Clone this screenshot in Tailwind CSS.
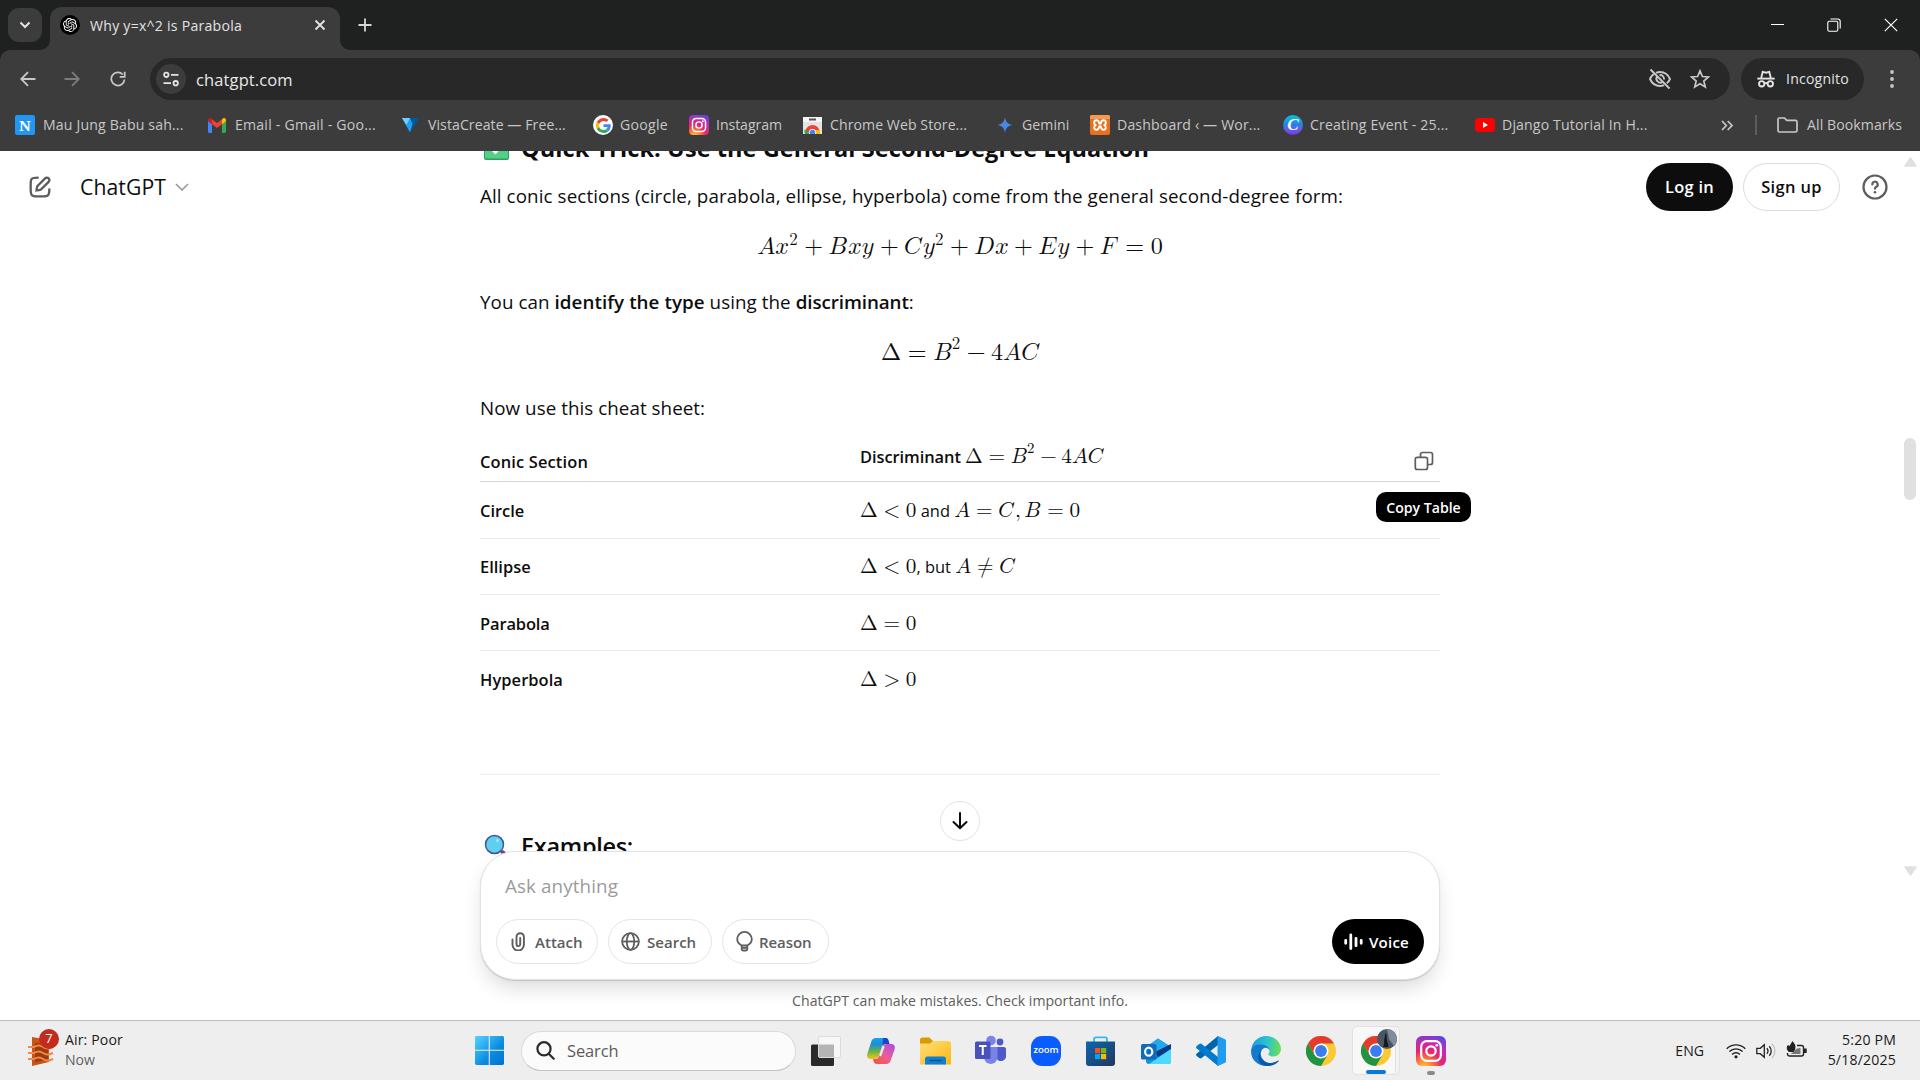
<!DOCTYPE html>
<html lang="en">
<head>
<meta charset="utf-8">
<title>Why y=x^2 is Parabola</title>
<script src="https://cdn.jsdelivr.net/npm/@tailwindcss/browser@4"></script>
</head>
<body class="flex h-[1080px] w-[1920px] flex-col overflow-hidden bg-white font-['Open_Sans',sans-serif] text-[14.1px] text-[#0d0d0d]">

<!-- Title bar -->
<header class="flex h-[50px] shrink-0 items-end bg-[#1f2121]">
  <div class="mb-2 ml-2 flex h-[34px] w-[34px] items-center justify-center rounded-[11px] bg-[#3c3c3c]">
    <svg class="size-[14px]" viewBox="0 0 14 14" fill="none" stroke="#e3e3e3" stroke-width="2"><path d="M2.5 4.5 7 9l4.5-4.5"/></svg>
  </div>
  <svg class="ml-[-2px] h-[10px] w-[10px]" viewBox="0 0 10 10"><path d="M10 0v10H0A10 10 0 0 0 10 0z" fill="#3c3c3c"/></svg>
  <div class="flex h-[43px] w-[290px] items-center rounded-t-[12px] bg-[#3c3c3c] pb-[7px] pl-[10px] pr-[14px]">
    <div class="flex size-5 items-center justify-center rounded-full bg-black">
      <svg class="size-[14px]" viewBox="0 0 24 24" fill="#fff"><path d="M22.2819 9.8211a5.9847 5.9847 0 0 0-.5157-4.9108 6.0462 6.0462 0 0 0-6.5098-2.9A6.0651 6.0651 0 0 0 4.9807 4.1818a5.9847 5.9847 0 0 0-3.9977 2.9 6.0462 6.0462 0 0 0 .7427 7.0966 5.98 5.98 0 0 0 .511 4.9107 6.051 6.051 0 0 0 6.5146 2.9001A5.9847 5.9847 0 0 0 13.2599 24a6.0557 6.0557 0 0 0 5.7718-4.2058 5.9894 5.9894 0 0 0 3.9977-2.9001 6.0557 6.0557 0 0 0-.7475-7.0729zm-9.022 12.6081a4.4755 4.4755 0 0 1-2.8764-1.0408l.1419-.0804 4.7783-2.7582a.7948.7948 0 0 0 .3927-.6813v-6.7369l2.02 1.1686a.071.071 0 0 1 .038.052v5.5826a4.504 4.504 0 0 1-4.4945 4.4944zm-9.6607-4.1254a4.4708 4.4708 0 0 1-.5346-3.0137l.142.0852 4.783 2.7582a.7712.7712 0 0 0 .7806 0l5.8428-3.3685v2.3324a.0804.0804 0 0 1-.0332.0615L9.74 19.9502a4.4992 4.4992 0 0 1-6.1408-1.6464zM2.3408 7.8956a4.485 4.485 0 0 1 2.3655-1.9728V11.6a.7664.7664 0 0 0 .3879.6765l5.8144 3.3543-2.0201 1.1685a.0757.0757 0 0 1-.071 0l-4.8303-2.7865A4.504 4.504 0 0 1 2.3408 7.872zm16.5963 3.8558L13.1038 8.364 15.1192 7.2a.0757.0757 0 0 1 .071 0l4.8303 2.7913a4.4944 4.4944 0 0 1-.6765 8.1042v-5.6772a.79.79 0 0 0-.407-.667zm2.0107-3.0231l-.142-.0852-4.7735-2.7818a.7759.7759 0 0 0-.7854 0L9.409 9.2297V6.8974a.0662.0662 0 0 1 .0284-.0615l4.8303-2.7866a4.4992 4.4992 0 0 1 6.6802 4.66zM8.3065 12.863l-2.02-1.1638a.0804.0804 0 0 1-.038-.0567V6.0742a4.4992 4.4992 0 0 1 7.3757-3.4537l-.142.0805L8.704 5.459a.7948.7948 0 0 0-.3927.6813zm1.0976-2.3654l2.602-1.4998 2.6069 1.4998v2.9994l-2.5974 1.4997-2.6067-1.4997Z"/></svg>
    </div>
    <span class="ml-[10px] mt-[2px] flex-1 whitespace-nowrap tracking-[0.24px] text-[#e3e3e3]">Why y=x^2 is Parabola</span>
    <svg class="size-3" viewBox="0 0 12 12" stroke="#e3e3e3" stroke-width="1.8"><path d="M1.5 1.5l9 9M10.5 1.5l-9 9"/></svg>
  </div>
  <svg class="h-[10px] w-[10px]" viewBox="0 0 10 10"><path d="M0 0v10h10A10 10 0 0 1 0 0z" fill="#3c3c3c"/></svg>
  <svg class="mb-[18px] ml-[8px] size-[14px]" viewBox="0 0 14 14" stroke="#d6d6d6" stroke-width="1.8"><path d="M7 .5v13M.5 7h13"/></svg>
  <div class="ml-auto mb-[18px] mr-[22px] flex items-center gap-[43px]">
    <svg class="size-[13px]" viewBox="0 0 13 13" stroke="#fff" stroke-width="1"><path d="M0 5.500h13"/></svg>
    <svg class="size-[14px]" viewBox="0 0 14 14" fill="none" stroke="#fff" stroke-width="1.1"><rect x=".8" y="3.2" width="10" height="10" rx="1.5"/><path d="M3.5 1h7.2c1.500 0 2.500 1 2.500 2.500v7"/></svg>
    <svg class="size-[14px]" viewBox="0 0 14 14" stroke="#fff" stroke-width="1.2"><path d="M.8.8l12.400 12.400M13.200.8.8 13.200"/></svg>
  </div>
</header>

<!-- Address bar -->
<div class="shrink-0 bg-[#1f2121]">
<nav class="flex h-[58px] items-center rounded-t-[10px] bg-[#3c3c3c] pl-[20px]">
  <svg class="size-4" viewBox="0 0 16 16" fill="none" stroke="#c7c7c7" stroke-width="1.8"><path d="M15.500 8H1.500M8 1.200 1.200 8 8 14.800"/></svg>
  <svg class="ml-[28px] size-4" viewBox="0 0 16 16" fill="none" stroke="#7c7c7c" stroke-width="1.8"><path d="M.5 8h14M8 1.200 14.800 8 8 14.800"/></svg>
  <svg class="ml-[30px] size-4" viewBox="0 0 16 16" fill="none" stroke="#c7c7c7" stroke-width="1.800"><path d="M14.500 8.500a6.600 6.600 0 1 1-1.700-5"/><path d="M14.700.8v5h-5"/></svg>
  <div class="ml-[24px] flex h-[42px] w-[1580px] items-center rounded-full bg-[#282828] pl-[6px] pr-[20px]">
    <div class="flex size-[30px] items-center justify-center rounded-full bg-[#3c3c3c]">
      <svg class="size-[16px]" viewBox="0 0 16 16" fill="none" stroke="#e3e3e3" stroke-width="1.800"><circle cx="3.300" cy="3.800" r="2.200"/><path d="M8 3.800h7.500M.5 12.200H8"/><circle cx="12.700" cy="12.200" r="2.200"/></svg>
    </div>
    <span class="ml-[10px] mt-[2px] flex-1 text-[16.5px] tracking-[0.12px] text-[#e8e8e8]">chatgpt.com</span>
    <svg class="size-6" viewBox="0 0 24 24" fill="none" stroke="#c7c7c7" stroke-width="1.900"><path d="M8 5.800C9.200 5.300 10.500 5 12 5c4.500 0 8 2.500 10 7-.8 1.800-1.900 3.200-3.200 4.300M16 18.200c-1.200.5-2.600.8-4 .8-4.500 0-8-2.500-10-7 .9-2 2.200-3.700 3.800-4.900"/><path d="M11.500 8a4 4 0 0 1 4.500 4.500M9 9.500a4 4 0 0 0 5.500 5.500M2.500 2.500l19 19"/></svg>
    <svg class="ml-[18px] size-[20px]" viewBox="0 0 20 20" fill="none" stroke="#c7c7c7" stroke-width="1.700"><path d="M10 1.800l2.400 5.700 6.100.5-4.700 4 1.500 6-5.300-3.200L4.700 18l1.500-6-4.700-4 6.100-.5z"/></svg>
  </div>
  <div class="ml-[11px] flex h-[42px] w-[123px] items-center rounded-full bg-[#282828] pl-4">
    <svg class="mt-[-1px] size-[18px]" viewBox="0 0 18 18" fill="none" stroke="#e3e3e3" stroke-width="1.900"><path d="M.3 8.600h17.400"/><path d="M4.200 8 5.700 1.800 9 2.700l3.300-.9L13.800 8"/><circle cx="4.700" cy="13.800" r="2.700"/><circle cx="13.300" cy="13.800" r="2.700"/><path d="M7.300 13.400q1.700-.9 3.400 0"/></svg>
    <span class="ml-[11px] tracking-[0.2px] text-[#e3e3e3]">Incognito</span>
  </div>
  <svg class="ml-[26px] h-[18px] w-1" viewBox="0 0 4 18" fill="#c7c7c7"><circle cx="2" cy="2" r="1.900"/><circle cx="2" cy="9" r="1.900"/><circle cx="2" cy="16" r="1.900"/></svg>
</nav>
</div>

<!-- Bookmarks bar -->
<nav class="flex h-[43px] shrink-0 items-start bg-[#3c3c3c] pl-[15px] text-[#c7c7c7]">
  <div class="mt-[7px] flex h-[20px] w-full items-center whitespace-nowrap">
    <div class="flex w-[193px] shrink-0 items-center">
      <span class="flex size-[20px] items-center justify-center rounded-[2px] bg-[#2196f3] font-['Noto_Serif',serif] text-[15px] font-bold text-white">N</span>
      <span class="ml-[8px] tracking-[0.16px]">Mau Jung Babu sah...</span>
    </div>
    <div class="flex w-[194px] shrink-0 items-center">
      <svg class="h-[15px] w-[18px]" viewBox="0 0 18 15"><path d="M0 2v11.800c0 .7.500 1.200 1.200 1.200H4V6z" fill="#4285f4"/><path d="M18 2v11.800c0 .7-.5 1.200-1.200 1.200H14V6z" fill="#34a853"/><path d="M4 6.200 9 10l5-3.800V1.200L9 5 4 1.200z" fill="#ea4335"/><path d="M14 1.200v5l4-3V2c0-1.900-2-2.500-3.200-1.500z" fill="#fbbc04"/><path d="M4 1.200v5l-4-3V2C0 .1 2-.5 3.200.5z" fill="#c5221f"/></svg>
      <span class="ml-[9px] tracking-[0.22px]">Email - Gmail - Goo...</span>
    </div>
    <div class="flex w-[191px] shrink-0 items-center">
      <svg class="h-[15px] w-[17px]" viewBox="0 0 17 15"><path d="M0 0h8l3 5-3 9.500z" fill="#1da1f2"/><path d="M0 0h8L4.500 7z" fill="#6dd0ff"/><path d="M8 0h9L8 15l3-8z" fill="#00589c"/></svg>
      <span class="ml-[9px] tracking-[0.07px]">VistaCreate — Free...</span>
    </div>
    <div class="flex w-[96px] shrink-0 items-center">
      <span class="flex size-[20px] items-center justify-center rounded-full bg-white"><svg class="size-[15px]" viewBox="0 0 48 48"><path fill="#EA4335" d="M24 9.500c3.540 0 6.710 1.220 9.210 3.600l6.850-6.850C35.900 2.380 30.470 0 24 0 14.620 0 6.510 5.380 2.560 13.220l7.980 6.190C12.430 13.720 17.740 9.500 24 9.500z"/><path fill="#4285F4" d="M46.980 24.550c0-1.570-.15-3.090-.38-4.550H24v9.020h12.940c-.58 2.960-2.260 5.480-4.780 7.180l7.730 6c4.510-4.180 7.090-10.360 7.090-17.650z"/><path fill="#FBBC05" d="M10.530 28.590c-.48-1.450-.76-2.990-.76-4.590s.27-3.140.76-4.590l-7.980-6.190C.92 16.460 0 20.120 0 24c0 3.880.92 7.540 2.560 10.780l7.970-6.190z"/><path fill="#34A853" d="M24 48c6.480 0 11.930-2.130 15.890-5.810l-7.730-6c-2.150 1.450-4.920 2.300-8.160 2.300-6.260 0-11.570-4.220-13.470-9.910l-7.980 6.190C6.510 42.620 14.620 48 24 48z"/></svg></span>
      <span class="ml-[7px] tracking-[0.28px]">Google</span>
    </div>
    <div class="flex w-[114px] shrink-0 items-center">
      <svg class="size-[20px]" viewBox="0 0 30 30"><use href="#insta"/></svg>
      <span class="ml-[7px] tracking-[-0.05px]">Instagram</span>
    </div>
    <div class="flex w-[194px] shrink-0 items-center">
      <svg class="h-[17px] w-[19px]" viewBox="0 0 19 17"><path d="M0 0h19v17H0z" fill="#e3e3e3"/><path d="M0 0h19v5H0z" fill="#f5f5f5"/><path d="M6 1.500h7v2H6z" fill="#555"/><path d="M2 17a7.500 8.500 0 0 1 14.500-3.500H9z" fill="#ea4335"/><path d="M1.500 12.500A8 8 0 0 0 2 17h6z" fill="#34a853"/><path d="M16.700 13H11v4h6.200z" fill="#fbbc04"/><circle cx="9.500" cy="15.500" r="3.600" fill="#fff"/><circle cx="9.500" cy="15.500" r="2.800" fill="#4285f4"/></svg>
      <span class="ml-2 tracking-[0.07px]">Chrome Web Store...</span>
    </div>
    <div class="flex w-[93px] shrink-0 items-center">
      <svg class="size-4" viewBox="0 0 16 16"><path d="M8 0c.6 5 3 7.400 8 8-5 .6-7.400 3-8 8-.6-5-3-7.400-8-8 5-.6 7.400-3 8-8z" fill="url(#gem)"/></svg>
      <span class="ml-[9px] tracking-[0.06px]">Gemini</span>
    </div>
    <div class="flex w-[193px] shrink-0 items-center">
      <svg class="size-[20px]" viewBox="0 0 20 20"><rect width="20" height="20" rx="2" fill="#e8701c"/><path d="M0 2a2 2 0 0 1 2-2h16a2 2 0 0 1 2 2v2H0z" fill="#f29b52"/><path d="M7.500 5.500C4 4.500 3 8 5.500 10 3 12 4 15.500 7.500 14.500 10 13.500 8 11.300 10 11.300s0 2.200 2.500 3.200C16 15.500 17 12 14.500 10 17 8 16 4.500 12.500 5.500 10 6.500 12 8.700 10 8.700s0-2.200-2.500-3.200z" fill="none" stroke="#fff" stroke-width="2"/></svg>
      <span class="ml-[7px] tracking-[0.15px]">Dashboard ‹ — Wor...</span>
    </div>
    <div class="flex w-[192px] shrink-0 items-center">
      <span class="flex size-[20px] items-center justify-center rounded-full bg-linear-to-b from-[#00c4cc] via-[#2b7be8] to-[#7d2ae8] font-['Liberation_Serif',serif] text-[17px] font-bold italic text-white">C</span>
      <span class="ml-[7px] tracking-[0.18px]">Creating Event - 25...</span>
    </div>
    <div class="flex w-[246px] shrink-0 items-center">
      <svg class="h-[14px] w-5" viewBox="0 0 20 14"><rect width="20" height="14" rx="3.500" fill="#f00"/><path d="M8 4l5 3-5 3z" fill="#fff"/></svg>
      <span class="ml-[7px] tracking-[0.15px]">Django Tutorial In H...</span>
    </div>
    <svg class="h-[11px] w-3" viewBox="0 0 12 11" fill="none" stroke="#c7c7c7" stroke-width="1.700"><path d="M1 1l4.300 4.500L1 10M6.700 1 11 5.500 6.700 10"/></svg>
    <div class="ml-[22px] h-5 w-[2px] bg-[#5c5c5c]"></div>
    <svg class="ml-5 h-[16px] w-[21px]" viewBox="0 0 21 16" fill="none" stroke="#c7c7c7" stroke-width="1.700"><path d="M1 13.500v-11C1 1.700 1.700 1 2.500 1h5L9.700 3.400h8.800c.8 0 1.500.7 1.500 1.500v8.600c0 .8-.7 1.500-1.500 1.500h-16C1.700 15 1 14.300 1 13.500z"/></svg>
    <span class="ml-[9px] tracking-[0.08px]">All Bookmarks</span>
  </div>
</nav>

<!-- Page -->
<main class="grid h-[869px] shrink-0 grid-cols-[480px_960px_480px] bg-white">
  <div class="flex h-[72px] items-center pl-[26px] text-[21.150px] text-[#0d0d0d]">
    <svg class="size-[28px]" viewBox="0 0 24 24" fill="none" stroke="#5d5d5d" stroke-width="2" stroke-linecap="round"><path d="M10 4C6.800 4 5.700 4.200 4.800 5.200 4 6 4 7.500 4 10.400v3.200c0 2.900 0 4.300.9 5.200.9 1.200 2.500 1.200 5.500 1.200h3.200c3 0 4.400 0 5.300-1 .9-.8 1.100-2 1.100-5"/><path d="M9.300 12.800c.1-.9.500-1.700 1.200-2.300l5.900-5.900a2.120 2.120 0 0 1 3 3l-5.900 5.900c-.6.7-1.400 1.100-2.300 1.200L9 15z"/></svg>
    <span class="ml-[26px] tracking-[0.1px]">ChatGPT</span>
    <svg class="ml-[9px] h-2 w-[14px]" viewBox="0 0 14 8" fill="none" stroke="#9b9b9b" stroke-width="1.700"><path d="M1 1l6 6 6-6"/></svg>
  </div>

  <section class="relative h-full">
    <article class="flow-root h-[708px] overflow-x-visible overflow-y-clip text-[18.800px] leading-[35px]">
      <div class="mt-[-28px] flex h-[56px] items-start">
        <svg class="ml-1 mt-[12px] size-[25px]" viewBox="0 0 25 25"><rect width="25" height="25" rx="2" fill="#2f9e63"/><rect x="1" width="23" height="23.500" rx="1.500" fill="#53cf88"/><path d="M6 11.500l5.500 5.500L20 7" fill="none" stroke="#fff" stroke-width="3.500"/></svg>
        <h3 class="ml-[12px] whitespace-nowrap text-[23.500px] font-bold leading-[50px] tracking-[0.080px]">Quick Trick: Use the General Second-Degree Equation</h3>
      </div>
      <p class="whitespace-nowrap tracking-[0.095px]">All conic sections (circle, parabola, ellipse, hyperbola) come from the general second-degree form:</p>
      <div class="flex h-[71px] items-start justify-center pt-[19px]">
        <math display="block" class="font-['Latin_Modern_Math','STIX_Two_Math','Liberation_Serif',serif] text-[24.200px]"><mi>A</mi><msup><mi>x</mi><mn>2</mn></msup><mo>+</mo><mi>B</mi><mspace width="0.050em"></mspace><mi>x</mi><mi>y</mi><mspace width="0.036em"></mspace><mo>+</mo><mi>C</mi><mspace width="0.072em"></mspace><msup><mi>y</mi><mn>2</mn></msup><mo>+</mo><mi>D</mi><mspace width="0.028em"></mspace><mi>x</mi><mo>+</mo><mi>E</mi><mspace width="0.058em"></mspace><mi>y</mi><mspace width="0.036em"></mspace><mo>+</mo><mi>F</mi><mspace width="0.139em"></mspace><mo>=</mo><mn>0</mn></math>
      </div>
      <p class="whitespace-nowrap tracking-[0.060px]">You can <strong class="font-semibold">identify the type</strong> using the <strong class="font-semibold tracking-[-0.080px]">discriminant</strong>:</p>
      <div class="flex h-[71px] items-start justify-center pt-[17px]">
        <math display="block" class="font-['Latin_Modern_Math','STIX_Two_Math','Liberation_Serif',serif] text-[24.200px]"><mi mathvariant="normal">Δ</mi><mo>=</mo><msup><mi>B</mi><mn>2</mn></msup><mo>−</mo><mn>4</mn><mi>A</mi><mi>C</mi><mspace width="0.020em"></mspace></math>
      </div>
      <p class="whitespace-nowrap tracking-[0.050px]">Now use this cheat sheet:</p>

      <div class="text-[16.450px] leading-[30px]">
        <div class="grid h-[56px] grid-cols-[380px_1fr_auto] items-end border-b border-[#d4d4d4] font-semibold">
          <span class="mb-[4px] tracking-[0.140px]">Conic Section</span>
          <span class="mb-[9px] whitespace-nowrap tracking-[-0.070px]">Discriminant <math class="font-['Latin_Modern_Math','STIX_Two_Math','Liberation_Serif',serif] text-[21.200px] font-normal tracking-normal"><mi mathvariant="normal">Δ</mi><mo>=</mo><msup><mi>B</mi><mn>2</mn></msup><mo>−</mo><mn>4</mn><mi>A</mi><mi>C</mi></math></span>
          <div class="relative mb-[10px] mr-[6px] h-5 w-5">
            <svg class="size-5" viewBox="0 0 20 20" fill="none" stroke="#5d5d5d" stroke-width="1.700"><rect x="1.300" y="6.300" width="12.200" height="12.200" rx="2"/><path d="M6.500 6V3.500c0-1.200.8-2 2-2h8c1.200 0 2 .8 2 2v8c0 1.200-.8 2-2 2h-2.700"/></svg>
            <div class="absolute left-[-38px] top-[41px] flex h-[30px] w-[95px] items-center justify-center rounded-[10px] bg-black pt-px text-[14.100px] font-semibold text-white"><span class="whitespace-nowrap">Copy Table</span></div>
          </div>
        </div>
        <div class="grid h-[57px] grid-cols-[380px_1fr] items-center border-b border-[#ececec] pt-[2px]">
          <span class="font-semibold">Circle</span>
          <span><math class="font-['Latin_Modern_Math','STIX_Two_Math','Liberation_Serif',serif] text-[21.200px]"><mi mathvariant="normal">Δ</mi><mo>&lt;</mo><mn>0</mn></math> and <math class="font-['Latin_Modern_Math','STIX_Two_Math','Liberation_Serif',serif] text-[21.200px]"><mi>A</mi><mo>=</mo><mi>C</mi><mspace width="0.072em"></mspace><mo>,</mo><mi>B</mi><mspace width="0.050em"></mspace><mo>=</mo><mn>0</mn></math></span>
        </div>
        <div class="grid h-[56px] grid-cols-[380px_1fr] items-center border-b border-[#ececec]">
          <span class="font-semibold">Ellipse</span>
          <span><math class="font-['Latin_Modern_Math','STIX_Two_Math','Liberation_Serif',serif] text-[21.200px]"><mi mathvariant="normal">Δ</mi><mo>&lt;</mo><mn>0</mn></math>, but <math class="font-['Latin_Modern_Math','STIX_Two_Math','Liberation_Serif',serif] text-[21.200px]"><mi>A</mi><mo>≠</mo><mi>C</mi></math></span>
        </div>
        <div class="grid h-[56px] grid-cols-[380px_1fr] items-center border-b border-[#ececec] pt-[2px]">
          <span class="font-semibold tracking-[-0.120px]">Parabola</span>
          <span><math class="font-['Latin_Modern_Math','STIX_Two_Math','Liberation_Serif',serif] text-[21.200px]"><mi mathvariant="normal">Δ</mi><mo>=</mo><mn>0</mn></math></span>
        </div>
        <div class="grid h-[57px] grid-cols-[380px_1fr] items-center">
          <span class="font-semibold tracking-[0.070px]">Hyperbola</span>
          <span><math class="font-['Latin_Modern_Math','STIX_Two_Math','Liberation_Serif',serif] text-[21.200px]"><mi mathvariant="normal">Δ</mi><mo>&gt;</mo><mn>0</mn></math></span>
        </div>
      </div>
      <hr class="mt-[66px] border-[#ececec]">
      <div class="mt-[51px] flex h-[40px] items-center">
        <svg class="ml-[4px] mt-[6px] size-[30px]" viewBox="0 0 30 30"><path d="M16 18l3-2 9 7-3 6z" fill="#7d3f8c"/><circle cx="10.500" cy="10.500" r="9" fill="#5fcfee" stroke="#42529c" stroke-width="1.500"/><circle cx="13.500" cy="6.500" r="1.500" fill="#a5e5f7"/></svg>
        <h3 class="ml-[7px] text-[23.500px] font-semibold tracking-[-0.300px]">Examples:</h3>
      </div>
    </article>

    <div class="absolute left-[460px] top-[650px] flex size-10 items-center justify-center rounded-full border border-[#e3e3e3] bg-white">
      <svg class="h-[18px] w-4" viewBox="0 0 16 18" fill="none" stroke="#0d0d0d" stroke-width="2" stroke-linecap="round" stroke-linejoin="round"><path d="M8 1v15M1.500 10 8 16.200 14.500 10"/></svg>
    </div>

    <div class="absolute left-0 top-[700px] flex h-[129px] w-[960px] flex-col justify-between rounded-[35px] border border-[#e2e2e2] bg-white px-[15px] pb-[15px] pt-[17px] shadow-[0_11px_20px_-3px_rgba(0,0,0,0.14),0_1px_1px_rgba(0,0,0,0.15)]">
      <p class="pl-[9px] text-[18.800px] leading-[35px] tracking-[0.120px] text-[#9b9b9b]">Ask anything</p>
      <div class="flex h-[45px] gap-[10px] text-[15.040px] font-semibold text-[#5d5d5d]">
        <button class="flex w-[102px] items-center rounded-full border border-[#e5e5e5] pl-[14px]">
          <svg class="mr-[9px] h-[19px] w-[15px]" viewBox="0 0 15 19" fill="none" stroke="#5d5d5d" stroke-width="1.900" stroke-linecap="round"><path d="M1.500 7.500v5.300a5.700 5.700 0 0 0 11.400 0V4.900a3.700 3.700 0 0 0-7.400 0v7.400a1.800 1.800 0 0 0 3.700 0V6"/></svg>
          <span class="mt-[2px]">Attach</span>
        </button>
        <button class="flex w-[104px] items-center rounded-full border border-[#e5e5e5] pl-[12px]">
          <svg class="mr-[7px] size-[19px]" viewBox="0 0 19 19" fill="none" stroke="#5d5d5d" stroke-width="1.800"><circle cx="9.500" cy="9.500" r="8.400"/><ellipse cx="9.500" cy="9.500" rx="3.700" ry="8.400"/><path d="M1 9.500h17"/></svg>
          <span class="mt-[2px]">Search</span>
        </button>
        <button class="flex w-[107px] items-center rounded-full border border-[#e5e5e5] pl-[13px]">
          <svg class="mr-[6px] h-[21px] w-[17px]" viewBox="0 0 17 21" fill="none" stroke="#5d5d5d" stroke-width="1.800"><path d="M5.700 14.500C3 13 1.200 11 1.200 8.200a7.300 7.300 0 0 1 14.600 0c0 2.800-1.800 4.800-4.500 6.300z"/><path d="M5.700 14.500v3.200c0 1 .8 1.800 1.800 1.800h2c1 0 1.800-.8 1.800-1.800v-3.200M5.700 16.800h5.600"/></svg>
          <span class="mt-[2px] tracking-[-0.100px]">Reason</span>
        </button>
        <button class="ml-auto flex w-[92px] items-center rounded-full bg-black pl-[12px] text-white">
          <svg class="mr-[6px] h-[18px] w-[19px]" viewBox="0 0 19 18" stroke="#fff" stroke-width="2.800" stroke-linecap="round"><path d="M1.700 7.300v3M6.800 2v13.600M12 5.300v7.400M17.200 7.300v3"/></svg>
          <span class="mt-[2px] tracking-[0.230px]">Voice</span>
        </button>
      </div>
    </div>
    <p class="absolute left-0 top-[839px] w-full text-center leading-[22px] tracking-[0.020px] text-[#5d5d5d]">ChatGPT can make mistakes. Check important info.</p>
  </section>

  <div class="flex">
    <div class="flex h-[72px] flex-1 items-center justify-end text-[16.450px] font-semibold">
      <button class="flex h-12 w-[87px] items-center justify-center rounded-full bg-[#0d0d0d] tracking-[0.270px] text-white">Log in</button>
      <button class="ml-[10px] flex h-12 w-[97px] items-center justify-center rounded-full border border-[#dcdcdc] tracking-[0.350px]">Sign up</button>
      <svg class="ml-[22px] size-[26px]" viewBox="0 0 26 26" fill="none" stroke="#5d5d5d" stroke-width="2.200" stroke-linecap="round"><circle cx="13" cy="13" r="11.500"/><path d="M10.300 10.500a2.700 2.700 0 1 1 4 2.300c-.8.5-1.300.9-1.300 1.900"/><path d="M13 18.200v.1" stroke-width="2.600"/></svg>
    </div>
    <div class="flex w-8 flex-col items-end pr-[3px]">
      <svg class="mt-[6px] h-[10px] w-[13px]" viewBox="0 0 13 10"><path d="M6.500 1 12 9H1z" fill="#e0e0e0" stroke="#e0e0e0" stroke-width="1.500" stroke-linejoin="round"/></svg>
      <div class="mr-px mt-[271px] h-[62px] w-3 rounded-full bg-[#e0e0e0]"></div>
      <svg class="mt-[366px] h-[10px] w-[13px]" viewBox="0 0 13 10"><path d="M6.500 9 1 1h11z" fill="#e0e0e0" stroke="#e0e0e0" stroke-width="1.500" stroke-linejoin="round"/></svg>
    </div>
  </div>
</main>

<!-- Taskbar -->
<footer class="flex h-[60px] shrink-0 items-center border-t border-[#bdbdbd] bg-[#eeeeee]">
  <div class="flex w-[475px] items-center pl-7">
    <div class="relative h-[32px] w-[26px]">
      <svg class="h-[32px] w-[26px]" viewBox="0 0 26 32"><path d="M4 2l17 3v22L4 31z" fill="#c9541a"/><path d="M7 8l13 1v16L7 27z" fill="#9c3a0c"/><path d="M0 12h6q5-3 9 0t10 0M0 18h6q5-3 9 0t10 0M0 24h6q5-3 9 0t10 0" fill="none" stroke="#ef8a4a" stroke-width="2"/></svg>
      <span class="absolute left-[11px] top-[-6px] flex size-[20px] items-center justify-center rounded-full bg-[#c42b1c] text-[13px] text-white">7</span>
    </div>
    <div class="ml-[11px] mt-[-1px] leading-5"><p class="tracking-[0.130px] text-[#1a1a1a]">Air: Poor</p><p class="text-[#5f5f5f]">Now</p></div>
  </div>
  <svg class="size-[29px] shrink-0" viewBox="0 0 30 30"><path d="M0 1.500C0 .7.700 0 1.500 0h12.700v14.200H0zM15.300 0h13.200c.8 0 1.500.7 1.500 1.500v12.700H15.300zM0 15.300h14.200V30H1.500C.7 30 0 29.300 0 28.500zM15.300 15.300H30v13.200c0 .8-.7 1.500-1.500 1.500H15.300z" fill="url(#win)"/></svg>
  <div class="ml-[17px] flex h-[40px] w-[275px] items-center rounded-full border border-[#dadada] border-b-[#c4c4c4] bg-[#fbfbfb] pl-[14px]">
    <svg class="size-[19px]" viewBox="0 0 19 19" fill="none" stroke="#2b2b2b" stroke-width="2.200" stroke-linecap="round"><circle cx="8" cy="7.800" r="6.600"/><path d="M12.700 12.700l5 5"/></svg>
    <span class="ml-[12px] mt-px text-[16.450px] tracking-[-0.100px] text-[#5a5a5a]">Search</span>
  </div>
  <svg class="ml-[15px] size-[30px]" viewBox="0 0 30 30"><rect y="8.500" width="23" height="21.500" rx="1.500" fill="#2a2a2a"/><rect x="7.500" y=".5" width="22" height="21" rx="1.500" fill="#f7f7f7" stroke="#dcdcdc"/><path d="M8 8.500h15V21H8z" fill="#b4b4b4"/></svg>
  <svg class="ml-[25px] size-[30px]" viewBox="0 0 30 30"><path d="M10 2h9c2 0 3 1 3.500 3l.8 3h-4c-2 0-3 1-3.500 3l-3 9c-.6 2-2 3-4 3H5c-3 0-4.500-2-3.700-5l4-12.500C6 3.500 7.500 2 10 2z" fill="url(#cop1)"/><path d="M17 2h3c1.500 0 2.200 1 2.700 3l.8 3h-4c-1.500 0-2.500.5-3.200 2z" fill="#1b48c8"/><path d="M20 28h-9c-2 0-3-1-3.500-3L7 23h2.500c2 0 3-1 3.500-3l3-9c.6-2 2-3 4-3H25c3 0 4.500 2 3.700 5l-4 11.500C24 26.500 22.500 28 20 28z" fill="url(#cop2)"/><path d="M13.200 19.500 16.600 9.500l2 1-3.500 10z" fill="#eee"/></svg>
  <svg class="ml-[24px] size-[31px]" viewBox="0 0 31 31"><path d="M0 5c0-1.500.8-2.500 2.500-2.500h6.800L13 6v5H0z" fill="#dc9a00"/><path d="M0 8.500h10L13 6h15.500C30 6 31 7 31 8.500V29.500H0z" fill="url(#fold)"/><path d="M5 29.500V24c0-1.500 1-2.500 2.500-2.500h16c1.500 0 2.500 1 2.500 2.500v5.500z" fill="#0f7fd2"/><path d="M9.500 25.500h12" stroke="#0a4b87" stroke-width="1.300"/></svg>
  <svg class="ml-[24px] size-[31px]" viewBox="0 0 31 31"><circle cx="25" cy="7" r="3.400" fill="#5059c9"/><path d="M20 12h9c1 0 2 1 2 2v6a5 5 0 0 1-10 2z" fill="#5059c9"/><circle cx="16" cy="5.500" r="4.800" fill="#7b83eb"/><path d="M10 12h12.500v11a6.800 6.800 0 0 1-13.500 0z" fill="#7b83eb"/><rect y="6.500" width="15.500" height="17.500" rx="1.500" fill="#4a52b9"/><path d="M4 11h7.500M7.750 11v9" stroke="#fff" stroke-width="2"/></svg>
  <div class="ml-[25px] flex size-[30px] items-center justify-center rounded-[11px] bg-[#0b5cff] text-[9.500px] font-semibold leading-none text-white"><span class="mt-[-2px]">zoom</span></div>
  <svg class="ml-[25px] h-[30px] w-[29px]" viewBox="0 0 29 30"><path d="M8 8V3c0-1 .6-1.700 1.700-1.700h9.600C20.400 1.300 21 2 21 3v5" fill="none" stroke="#34b8ee" stroke-width="1.800"/><path d="M0 5.500h29V27c0 1.700-1 3-3 3H3c-2 0-3-1.300-3-3z" fill="url(#store)"/><path d="M9 12h5.200v5.200H9z" fill="#f25022"/><path d="M15 12h5.200v5.200H15z" fill="#7fba00"/><path d="M9 18h5.200v5.200H9z" fill="#00a4ef"/><path d="M15 18h5.200v5.200H15z" fill="#ffb900"/></svg>
  <svg class="ml-[26px] size-[30px]" viewBox="0 0 30 30"><path d="M5 11 17 2.500 30 11v14a3 3 0 0 1-3 3H8a3 3 0 0 1-3-3z" fill="#1490df"/><path d="M17 2.500 30 11 15 20 8 15V9z" fill="#28a8ea"/><path d="M30 8v5L17 21l-3-5z" fill="#0a3a86"/><path d="M30 13v12a3 3 0 0 1-3 3H8z" fill="#50d9ff"/><rect y="8" width="15.500" height="15.500" rx="1.500" fill="#0f6cbd"/><ellipse cx="7.700" cy="15.700" rx="3.600" ry="4" fill="none" stroke="#fff" stroke-width="2.200"/></svg>
  <svg class="ml-[25px] size-[30px]" viewBox="0 0 30 30"><path d="M22 0v9L5 22.500l-2.200-.8L.5 19.800c-.6-.6-.6-1.400 0-2z" fill="#0065a9"/><path d="M22 30v-9L5 7.500l-2.200.8L.5 10.200c-.6.600-.6 1.400 0 2z" fill="#007acc"/><path d="M22 0l7 3.200c.6.300 1 .8 1 1.500v20.600c0 .7-.4 1.200-1 1.500L22 30c-.8.300-.5-.5-.5-1.300V1.300c0-.8-.2-1.600.5-1.300z" fill="#1f9cf0"/></svg>
  <svg class="ml-[25px] size-[30px]" viewBox="0 0 30 30"><path d="M.3 13C1.500 5.500 7.500 0 15 0c9 0 15 6.500 15 13 0 4.500-3.500 7.500-7.500 7.500-3 0-5.200-1-5.200-2.200 0-.8 1.200-1.300 1.200-3.300 0-3-3.500-5-8-5S1.500 11 .3 13z" fill="url(#edge1)"/><path d="M.1 14C.8 10.500 5 8.500 9.500 8.500c4.500 0 8.500 2 9 6-1-2-3-3-5-2.500-5 1.500-5 9 0 13 4 3 9 2.500 14-.5C25 28 20.500 30 15.500 30 7 30-.8 23.500.1 14z" fill="#1479cf"/><path d="M12 12.800c-4.500 3-4 9.500 1.500 12.700 4.500 2.500 9 1.700 13.500-.8.600-.3 1 0 .6.600C25 28.500 20.500 30 16 30 6 29.500 4.500 17 12 12.800z" fill="#0c59a4"/></svg>
  <svg class="ml-[25px] size-[30px]" viewBox="0 0 30 30"><use href="#chrome"/></svg>
  <div class="relative ml-[16px] mr-[16px] flex h-[49px] w-[48px] items-center rounded-[5px] border border-[#e2e2e2] bg-[#f3f3f3]">
    <div class="flex h-[47px] w-[43px] items-center justify-center rounded-[5px] border-r border-[#dedede] bg-[#f8f8f8] pl-[3px]">
      <svg class="size-[30px]" viewBox="0 0 30 30"><use href="#chrome"/></svg>
    </div>
    <svg class="absolute left-[24px] top-[2px] size-5" viewBox="0 0 20 20"><circle cx="10" cy="10" r="10" fill="#4a5664"/><path d="M10 0a10 10 0 0 1 7 17L12 10z" fill="#7e8d9b"/><path d="M8.500 3.500c1.500 2 1 5 1.500 8s2 4 1 6.500H6c2-3 .5-6 1.500-8.500z" fill="#14191f"/></svg>
    <div class="absolute bottom-0 left-[13px] h-1 w-5 rounded-full bg-[#0b7ad6]"></div>
  </div>
  <div class="relative size-[30px]">
    <svg class="size-[30px]" viewBox="0 0 30 30"><use href="#insta"/></svg>
    <div class="absolute bottom-[-9px] left-[11px] h-1 w-2 rounded-full bg-[#8a8a8a]"></div>
  </div>
  <div class="ml-auto flex items-center pr-6 text-[#1a1a1a]">
    <span class="mr-[22px]">ENG</span>
    <svg class="h-[16px] w-5" viewBox="0 0 20 16" fill="none" stroke="#222" stroke-width="1.400"><path d="M.7 5.700a13.200 13.200 0 0 1 18.600 0M3.400 8.600a9.400 9.400 0 0 1 13.200 0M6.100 11.400a5.600 5.600 0 0 1 7.800 0"/><circle cx="10" cy="13.800" r="1.600" fill="#222" stroke="none"/></svg>
    <svg class="ml-[10px] h-[18px] w-5" viewBox="0 0 20 18" fill="none" stroke="#222" stroke-width="1.300"><path d="M.8 6.300h3.500l4-3.600v12.600l-4-3.600H.8z"/><path d="M10.800 6.300a4 4 0 0 1 0 5.400M13.300 4.200a7 7 0 0 1 0 9.600"/><path d="M16 2a10 10 0 0 1 0 14" stroke="#c0c0c0"/></svg>
    <svg class="ml-[10px] mt-[-2px] h-[17px] w-[21px]" viewBox="0 0 21 17" fill="none" stroke="#222" stroke-width="1.400"><path d="M11 4.500h4.500c1.200 0 2 .8 2 2V13c0 1.200-.8 2-2 2h-12c-1 0-2-.8-2-2v-1"/><path d="M18 8.300h2v3h-2" fill="#222"/><path d="M4.500 13h10V7c-3 0-5 1-6 3z" fill="#777" stroke="none"/><path d="M6.500 0 9 3.500c1 2.500.5 5.500-1.500 7.500H3C.5 9 0 6 2 4l1.500 1z" fill="#222" stroke="none"/></svg>
    <div class="ml-[9px] mt-[-2px] w-[80px] text-right leading-5"><p class="tracking-[0.180px]">5:20 PM</p><p class="tracking-[0.180px]">5/18/2025</p></div>
  </div>
</footer>

<!-- Shared symbols and gradients -->
<svg class="absolute size-0" aria-hidden="true">
  <defs>
    <linearGradient id="gem" x1="0" y1="0" x2="1" y2="1"><stop stop-color="#9b72cb"/><stop offset=".5" stop-color="#3f8be8"/><stop offset="1" stop-color="#4285f4"/></linearGradient>
    <linearGradient id="win" x1="0" y1="0" x2="1" y2="1"><stop stop-color="#55d4ff"/><stop offset=".6" stop-color="#0b8be0"/><stop offset="1" stop-color="#0071d0"/></linearGradient>
    <linearGradient id="cop1" x1="0" y1="0" x2="0" y2="1"><stop stop-color="#16a3ec"/><stop offset=".3" stop-color="#1c8fd6"/><stop offset=".65" stop-color="#6db33f"/><stop offset="1" stop-color="#f5c51c"/></linearGradient>
    <linearGradient id="cop2" x1="1" y1="0" x2="0" y2="1"><stop stop-color="#a64de8"/><stop offset=".5" stop-color="#ec5d9b"/><stop offset="1" stop-color="#f5562c"/></linearGradient>
    <linearGradient id="fold" x1="0" y1="0" x2="1" y2="1"><stop stop-color="#ffe07a"/><stop offset="1" stop-color="#fbb70f"/></linearGradient>
    <linearGradient id="store" x1="0" y1="0" x2="1" y2="1"><stop stop-color="#0c66ae"/><stop offset="1" stop-color="#22375e"/></linearGradient>
    <linearGradient id="edge1" x1="0" y1=".5" x2="1" y2=".6"><stop stop-color="#1b9de2"/><stop offset=".5" stop-color="#2bc3d2"/><stop offset="1" stop-color="#6fe04f"/></linearGradient>
    <radialGradient id="ig" cx=".28" cy="1.050" r="1.150"><stop stop-color="#fdc943"/><stop offset=".25" stop-color="#fb7a34"/><stop offset=".5" stop-color="#e8246f"/><stop offset=".75" stop-color="#c02bb0"/><stop offset="1" stop-color="#5b47e0"/></radialGradient>
    <symbol id="insta" viewBox="0 0 30 30"><rect width="30" height="30" rx="6" fill="url(#ig)"/><rect x="5.200" y="5.200" width="19.600" height="19.600" rx="5.500" fill="none" stroke="#fff" stroke-width="2.200"/><circle cx="15" cy="15" r="4.700" fill="none" stroke="#fff" stroke-width="2.200"/><circle cx="20.800" cy="9.300" r="1.400" fill="#fff"/></symbol>
    <symbol id="chrome" viewBox="0 0 30 30"><circle cx="15" cy="15" r="15" fill="#fcc934"/><path d="M2 7.500A15 15 0 0 1 28 7.500H15L8.500 18.750z" fill="#e33b2e"/><path d="M2 7.500A15 15 0 0 0 15 30l6.500-11.250L15 22l-6.500-3.250z" fill="#229342"/><circle cx="15" cy="15" r="7.500" fill="#fff"/><circle cx="15" cy="15" r="5.900" fill="#3b7ded"/></symbol>
  </defs>
</svg>
</body>
</html>
